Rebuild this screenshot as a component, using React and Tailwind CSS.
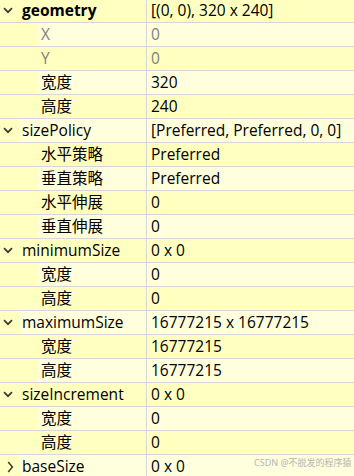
import React from "react";

const rows = [
  { l: "geometry", v: "[(0, 0), 320 x 240]", lvl: 0, bold: true, ex: "down" },
  { l: "X", v: "0", lvl: 1, gray: true },
  { l: "Y", v: "0", lvl: 1, gray: true },
  { l: "宽度", v: "320", lvl: 1 },
  { l: "高度", v: "240", lvl: 1 },
  { l: "sizePolicy", v: "[Preferred, Preferred, 0, 0]", lvl: 0, ex: "down" },
  { l: "水平策略", v: "Preferred", lvl: 1 },
  { l: "垂直策略", v: "Preferred", lvl: 1 },
  { l: "水平伸展", v: "0", lvl: 1 },
  { l: "垂直伸展", v: "0", lvl: 1 },
  { l: "minimumSize", v: "0 x 0", lvl: 0, ex: "down" },
  { l: "宽度", v: "0", lvl: 1 },
  { l: "高度", v: "0", lvl: 1 },
  { l: "maximumSize", v: "16777215 x 16777215", lvl: 0, ex: "down" },
  { l: "宽度", v: "16777215", lvl: 1 },
  { l: "高度", v: "16777215", lvl: 1 },
  { l: "sizeIncrement", v: "0 x 0", lvl: 0, ex: "down" },
  { l: "宽度", v: "0", lvl: 1 },
  { l: "高度", v: "0", lvl: 1 },
  { l: "baseSize", v: "0 x 0", lvl: 0, ex: "right" },
];

function Chevron({ dir }) {
  if (dir === "down")
    return (
      <svg width="10" height="7" viewBox="0 0 10 7" className="block">
        <path d="M1 1.2 L5 5.2 L9 1.2" fill="none" stroke="#3a3a3a" strokeWidth="1.7" />
      </svg>
    );
  return (
    <svg width="7" height="12" viewBox="0 0 7 12" className="block">
      <path d="M1.2 1 L5.4 6 L1.2 11" fill="none" stroke="#3a3a3a" strokeWidth="1.5" />
    </svg>
  );
}

export default function App() {
  return (
    <div
      className="w-[354px] h-[476px] overflow-hidden bg-[#ffffbf] relative"
      style={{ fontFamily: '"Open Sans", "Noto Sans CJK SC", sans-serif' }}
    >
      <div className="-mt-px">
        {rows.map((r, i) => {
          const alt = i % 2 === 1;
          const cellBg = alt ? "bg-[#ffffdd]" : "bg-[#ffffbf]";
          const txt = r.gray ? "text-[#808080]" : "text-black";
          return (
            <div key={i} className="flex h-[24px] border-b border-[#d6d6d6] bg-[#ffffbf]">
              <div className="w-[147px] flex border-r border-[#d6d6d6] shrink-0">
                <div
                  className={
                    (r.lvl === 0 ? "w-[19px]" : "w-[38px]") +
                    " shrink-0 flex items-center " +
                    (r.ex === "right" ? "justify-center pl-[1px]" : "justify-start pl-[3px]")
                  }
                >
                  {r.ex && <Chevron dir={r.ex} />}
                </div>
                <div
                  className={
                    cellBg +
                    " flex-1 flex items-center pl-[3px] text-[15.5px] leading-none whitespace-nowrap " +
                    txt +
                    (r.bold ? " font-bold" : "")
                  }
                >
                  {r.l}
                </div>
              </div>
              <div
                className={
                  cellBg +
                  " flex-1 flex items-center pl-[4px] text-[15.5px] leading-none whitespace-nowrap " +
                  txt
                }
              >
                {r.v}
              </div>
            </div>
          );
        })}
      </div>
      <div
        className="absolute left-[254px] top-[458px] text-[9px] leading-none text-[#b4b4b4] whitespace-nowrap"
        style={{ fontFamily: '"Noto Sans", "Noto Sans CJK SC", sans-serif' }}
      >
        CSDN @不脱发的程序猿
      </div>
    </div>
  );
}
